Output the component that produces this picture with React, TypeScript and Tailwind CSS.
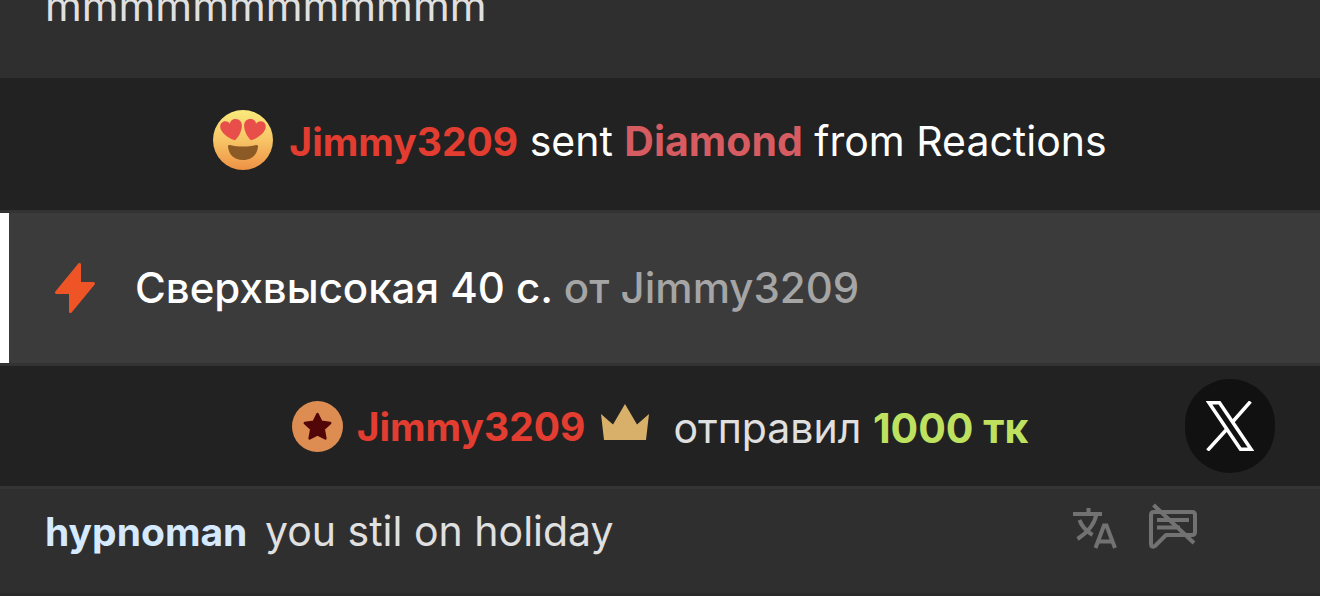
function LoveFace() {
  return (
    <svg className="size-[60px] shrink-0" viewBox="0 0 60 60" aria-hidden="true">
      <defs>
        <linearGradient id="face" x1="0" y1="0" x2="0" y2="1">
          <stop offset="0" stopColor="#fbea7c" />
          <stop offset="0.5" stopColor="#f7c566" />
          <stop offset="1" stopColor="#ee9145" />
        </linearGradient>
      </defs>
      <circle cx="30" cy="30" r="30" fill="url(#face)" />
      <path
        fill="#e94f4a"
        d="M22 30.2C18 29.5 9.600 24.500 7.700 19C6.200 14.600 8.600 11.500 11.800 11.200C14 11 16 12 17 13.700C17.200 11 19.500 9 22.600 9C26.500 9 29.300 12 28.900 16.500C28.500 21.500 25.500 27.500 22 30.200Z"
      />
      <path
        fill="#e94f4a"
        d="M38 30.200C42 29.500 50.400 24.500 52.300 19C53.800 14.600 51.400 11.500 48.200 11.200C46 11 44 12 43 13.700C42.800 11 40.500 9 37.400 9C33.500 9 30.700 12 31.100 16.500C31.500 21.500 34.500 27.500 38 30.200Z"
      />
      <path
        fill="#8c5a25"
        d="M17 35C25 37 35 37 43 35C44.500 34.700 45.200 35.500 45 37C44 45 38.500 50 30 50C21.500 50 16 45 15 37C14.800 35.500 15.500 34.700 17 35Z"
      />
    </svg>
  );
}

function Bolt() {
  return (
    <svg className="h-[50px] w-10 shrink-0" viewBox="0 0 40 50" aria-hidden="true">
      <path
        fill="#ee5425"
        stroke="#ee5425"
        strokeWidth="3"
        strokeLinejoin="round"
        d="M24.500 1.500V20.500H38.500L15.500 48.500V29.500H1.500Z"
      />
    </svg>
  );
}

function StarBadge() {
  return (
    <svg className="size-[51px] shrink-0" viewBox="0 0 51 51" aria-hidden="true">
      <circle cx="25.500" cy="25.500" r="25.500" fill="#dd8d52" />
      <path
        fill="#520607"
        stroke="#520607"
        strokeWidth="2.500"
        strokeLinejoin="round"
        d="M25.500 13L29.300 20.800L38.200 22L31.700 28L33.400 37.500L25.500 33.300L17.600 37.500L19.300 28L12.800 22L21.700 20.800Z"
      />
    </svg>
  );
}

function Crown() {
  return (
    <svg className="h-9 w-12 shrink-0" viewBox="0 0 48 36" aria-hidden="true">
      <path fill="#d9b069" d="M0 10L12 20.500L24 0L36 20.500L48 10L45 36H3Z" />
    </svg>
  );
}

function XMark() {
  return (
    <svg
      className="h-[50px] w-12"
      viewBox="0 0 48 50"
      fill="none"
      stroke="currentColor"
      strokeWidth="3.500"
      aria-hidden="true"
    >
      <path d="M3 1.800H13.500L45 48.200H34.500Z" />
      <path d="M44.500 0.500L26.500 21M21.500 27.500L1.500 49.500" />
    </svg>
  );
}

function Translate() {
  return (
    <svg
      className="h-[41px] w-[45px]"
      viewBox="0 0 45 41"
      fill="none"
      stroke="#727272"
      strokeWidth="4"
      aria-hidden="true"
    >
      <path d="M1 6H30M16.500 0V6M24.500 6C22.500 17 14 25.500 5.500 31M7.500 12C9.500 18 15 23.500 20.500 27" />
      <path d="M23.500 40L32 17.500H34.500L43 40M27 33.500H40" />
    </svg>
  );
}

function MuteChat() {
  return (
    <svg
      className="h-[46px] w-12"
      viewBox="0 0 48 46"
      fill="none"
      stroke="#727272"
      strokeWidth="4"
      aria-hidden="true"
    >
      <path
        strokeLinejoin="round"
        d="M5 9H43Q46 9 46 12V29Q46 32 43 32H17L6 43Q2 45 2 41V12Q2 9 5 9Z"
      />
      <path d="M8 17H40M8 24.500H31M4.500 2L45 40" />
    </svg>
  );
}

export default function App() {
  return (
    <main className="overflow-hidden bg-[#2f2f2f] font-['Inter','Liberation_Sans',sans-serif] text-[42px] leading-[60px] text-[#e0e0e0]">
      <p className="-mt-6 px-[45px] pb-[42px]">mmmmmmmmmmmm</p>

      <div className="flex items-center justify-center gap-4 bg-[#222222] pt-[31px] pb-[39px] text-[41px] text-white">
        <LoveFace />
        <p className="pt-0.5">
          <b className="text-[39px] leading-none font-bold text-[#e23d30]">Jimmy3209</b> sent{" "}
          <b className="font-bold text-[#d65c61]">Diamond</b> from Reactions
        </p>
      </div>

      <div className="border-y-3 border-[#333333] bg-[#3b3b3b]">
        <div className="flex items-center gap-10 border-l-9 border-white py-[45px] pl-[46px]">
          <Bolt />
          <p className="font-medium text-white">
            Сверхвысокая 40 с. <span className="text-[#a5a5a5]">от Jimmy3209</span>
          </p>
        </div>
      </div>

      <div className="relative flex items-center justify-center bg-[#222222] py-7 text-[41px]">
        <StarBadge />
        <b className="ml-3.5 pt-0.5 text-[39px] font-bold text-[#e23d30]">Jimmy3209</b>
        <span className="mr-6 ml-4 pb-2">
          <Crown />
        </span>
        <p className="pt-1">
          отправил <b className="font-bold text-[#bfe160]">1000 тк</b>
        </p>
        <button
          type="button"
          aria-label="X"
          className="absolute right-[45px] flex h-[94px] w-[90px] items-center justify-center rounded-full bg-[#111111] text-white"
        >
          <XMark />
        </button>
      </div>

      <div className="flex items-start justify-between border-t-3 border-b-3 border-t-[#353535] border-b-[#2a2a2a] pt-3 pr-[123px] pb-8 pl-[45px] text-[41px]">
        <p>
          <b className="mr-1.5 text-[39px] leading-none font-bold text-[#d5e9ff]">hypnoman</b> you stil on holiday
        </p>
        <div className="flex items-end gap-8 pt-0.5">
          <button type="button" aria-label="Translate">
            <Translate />
          </button>
          <button type="button" aria-label="Mute">
            <MuteChat />
          </button>
        </div>
      </div>
    </main>
  );
}
